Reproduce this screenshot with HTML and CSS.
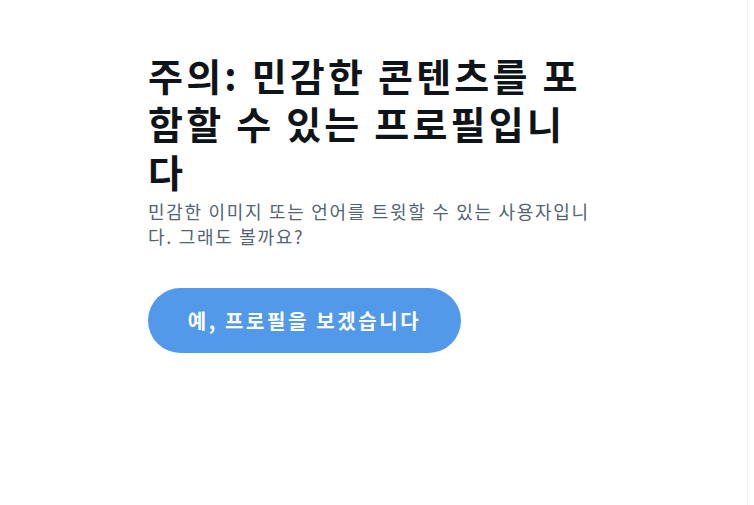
FILE: index.html
```
<html>
<head>
    <meta charset="UTF-8">
    <link rel="stylesheet" href="styles.css">
</head>

<body>

<div class="page">
    <main class="column">
        <div class="notice">
            <h1 class="notice_title">주의: 민감한 콘텐츠를 포함할 수 있는 프로필입니다</h1>
            <p class="notice_text">민감한 이미지 또는 언어를 트윗할 수 있는 사용자입니다. 그래도 볼까요?</p>
            <button type="button" class="notice_button">예, 프로필을 보겠습니다</button>
        </div>
    </main>
</div>

</body>

</html>
```

FILE: styles.css
```
body {
    margin: 0;
    background: white;
    font-family: "Noto Sans CJK KR", "Noto Sans", sans-serif;
}

.page {
    display: flex;
    min-height: 505px;
}

.column {
    width: 747px;
    min-height: 505px;
    border-right: 1px solid #eff3f4;
}

.notice {
    width: 448px;
    margin: 0 0 0 148px;
    padding-top: 51px;
}

.notice_title {
    margin: 0;
    font-size: 38px;
    line-height: 48px;
    font-weight: 700;
    letter-spacing: 3.2px;
    color: #0f1419;
}

.notice_text {
    margin: 4px 0 0 0;
    font-size: 18px;
    line-height: 25px;
    letter-spacing: 1.7px;
    color: #536471;
}

.notice_button {
    display: block;
    margin-top: 39px;
    width: 313px;
    height: 65px;
    border: none;
    border-radius: 33px;
    background: #5299ea;
    color: white;
    font-family: inherit;
    font-size: 20px;
    font-weight: 700;
    letter-spacing: 2.6px;
    outline: none;
    cursor: pointer;
}
```
